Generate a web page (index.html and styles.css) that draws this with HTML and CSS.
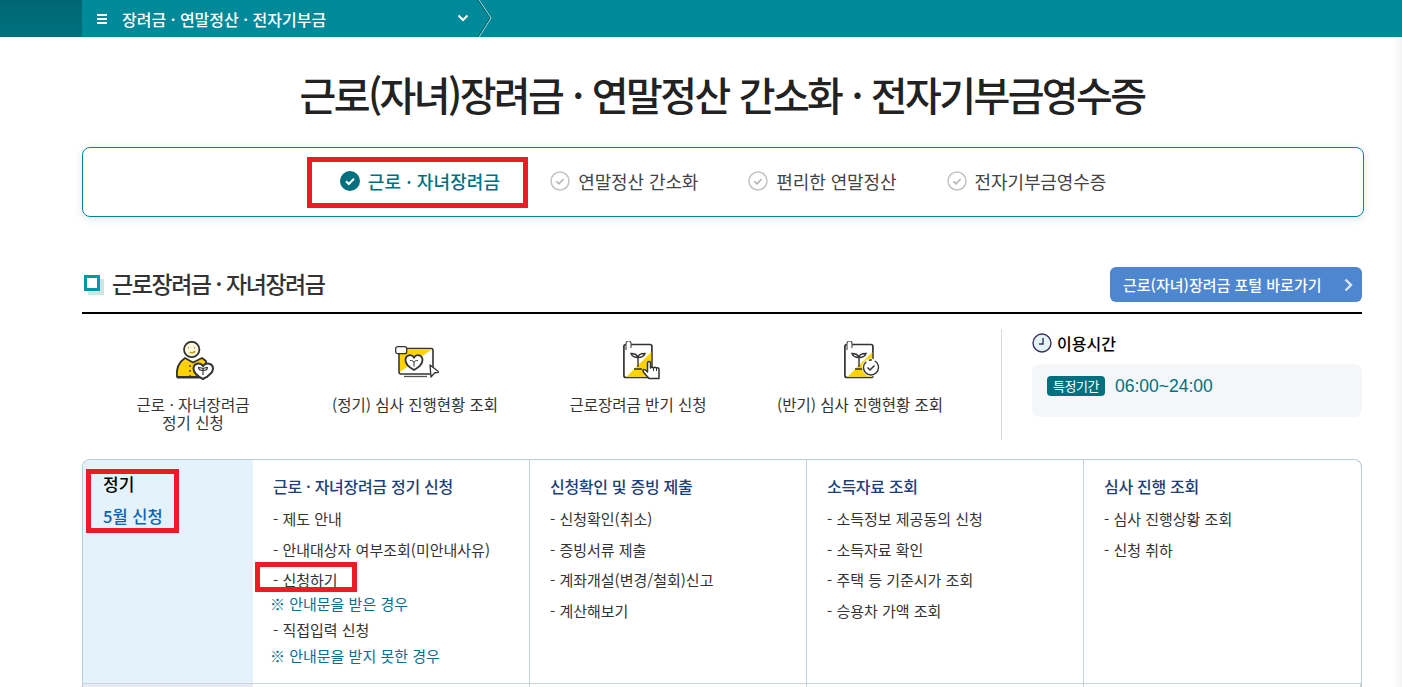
FILE: index.html
```html
<!DOCTYPE html>
<html lang="ko">
<head>
<meta charset="utf-8">
<title>근로(자녀)장려금 · 연말정산 간소화 · 전자기부금영수증</title>
<link rel="stylesheet" href="styles.css">
</head>
<body>
<div class="edge-shade"></div>
<header class="topbar">
  <div class="topbar-home"></div>
  <div class="crumb">
    <span class="burger"><i></i><i></i><i></i></span>
    <span class="crumb-text">장려금 · 연말정산 · 전자기부금</span>
    <svg class="crumb-chev" width="12" height="8" viewBox="0 0 12 8"><path d="M1.500 1.500 6 6l4.500-4.500" fill="none" stroke="#fff" stroke-width="2"/></svg>
    <svg class="crumb-sep" width="16" height="37" viewBox="0 0 16 37"><path d="M2 0 14 18 2 37" fill="none" stroke="#c4e2e6" stroke-width="1"/><path d="M1 0 13 18 1 37" fill="none" stroke="#00626f" stroke-width="1"/></svg>
  </div>
</header>
<main class="page">
  <h1 class="title">근로(자녀)장려금 · 연말정산 간소화 · 전자기부금영수증</h1>
  <nav class="tabs">
    <a class="tab tab-on">
      <svg width="20" height="20" viewBox="0 0 20 20"><circle cx="10" cy="10" r="10" fill="#00707f"/><path d="M6 10.200 8.800 13 14 7.800" fill="none" stroke="#fff" stroke-width="2"/></svg>
      <span>근로 · 자녀장려금</span>
      <span class="redbox redbox-tab"></span>
    </a>
    <a class="tab">
      <svg width="20" height="20" viewBox="0 0 20 20"><circle cx="10" cy="10" r="9" fill="#fff" stroke="#c4c4c4" stroke-width="1.500"/><path d="M6.300 10.200 8.900 12.800 13.700 8" fill="none" stroke="#b5b5b5" stroke-width="1.600"/></svg>
      <span>연말정산 간소화</span>
    </a>
    <a class="tab">
      <svg width="20" height="20" viewBox="0 0 20 20"><circle cx="10" cy="10" r="9" fill="#fff" stroke="#c4c4c4" stroke-width="1.500"/><path d="M6.300 10.200 8.900 12.800 13.700 8" fill="none" stroke="#b5b5b5" stroke-width="1.600"/></svg>
      <span>편리한 연말정산</span>
    </a>
    <a class="tab">
      <svg width="20" height="20" viewBox="0 0 20 20"><circle cx="10" cy="10" r="9" fill="#fff" stroke="#c4c4c4" stroke-width="1.500"/><path d="M6.300 10.200 8.900 12.800 13.700 8" fill="none" stroke="#b5b5b5" stroke-width="1.600"/></svg>
      <span>전자기부금영수증</span>
    </a>
  </nav>

  <section class="head">
    <h2 class="head-title"><span class="head-mark"></span>근로장려금 · 자녀장려금</h2>
    <a class="portal"><span>근로(자녀)장려금 포털 바로가기</span>
      <svg width="9" height="14" viewBox="0 0 9 14"><path d="M1.500 1.500 7 7l-5.500 5.500" fill="none" stroke="#dbe7f6" stroke-width="2.400"/></svg>
    </a>
  </section>

  <section class="quick">
    <ul class="quick-list">
      <li class="quick-item">
        <svg width="44" height="40" viewBox="-5 0 44 40">
          <path d="M1 36c-1-8 2-15 8-19l8 4.500 9-4.500 4 3 1 16z" fill="#ffd200" stroke="#333" stroke-width="1.800" stroke-linejoin="round"/>
          <path d="M1 36.500h26" stroke="#333" stroke-width="2"/>
          <circle cx="15.700" cy="8.500" r="7.700" fill="#fff9dc" stroke="#333" stroke-width="1.800"/>
          <path d="M13.500 11c2 1.500 4 1 5.500-1" stroke="#c79a00" stroke-width="1.400" fill="none"/>
          <path d="M12.500 6.500v.8M18.500 6.500v.8" stroke="#333" stroke-width="1.200"/>
          <circle cx="14" cy="25" r=".9" fill="#333"/><circle cx="14" cy="30" r=".9" fill="#333"/><circle cx="14" cy="35" r=".9" fill="#333"/>
          <path d="M27 38c-6-3-9.500-6-9.500-10.500 0-5 6.500-7 9.500-2.500 3-4.500 10-2.500 10 2.500C37 32 33 35 27 38z" fill="#fff" stroke="#333" stroke-width="2"/>
          <path d="M27 34v-5m-4.500-2.500c2.500 0 4.500.7 4.500 2.500 0-1.800 2-2.500 4.500-2.500 0 2-1.500 3-4.500 3-3 0-4.500-1-4.500-3z" fill="none" stroke="#333" stroke-width="1.100"/>
        </svg>
        <span>근로 · 자녀장려금<br>정기 신청</span>
      </li>
      <li class="quick-item">
        <svg width="48" height="40" viewBox="-4 -5 48 40">
          <rect x="4" y="2.500" width="34" height="25.500" rx="2" fill="#fff" stroke="#333" stroke-width="1.600"/>
          <path d="M5 3.500h31.500L5 26z" fill="#ffd200"/>
          <rect x=".7" y=".7" width="11" height="7" rx="2" fill="#fff" stroke="#333" stroke-width="1.300"/>
          <path d="M19 24c-5.500-3-8.500-6-8.500-10 0-5 6-6.500 8.500-2.500 2.500-4 8.500-2.500 8.500 2.500 0 4-3 7-8.500 10z" fill="#fff" stroke="#333" stroke-width="1.800"/>
          <path d="M19 20.500v-4m-4-2c2 0 4 .5 4 2 0-1.500 2-2 4-2" fill="none" stroke="#333"/>
          <path d="M35 19l9 7-4.500 1-3.500 4z" fill="#fff" stroke="#333" stroke-width="1.300" stroke-linejoin="round"/>
          <path d="M9 30.500h23" stroke="#555" stroke-width="1.300"/>
        </svg>
        <span>(정기) 심사 진행현황 조회</span>
      </li>
      <li class="quick-item">
        <svg width="44" height="40" viewBox="-7 0 44 40">
          <rect x=".9" y="3.500" width="28" height="33" rx="2" fill="#fff" stroke="#333" stroke-width="1.700"/>
          <path d="M28.300 11v24.700H3.500z" fill="#ffd200"/>
          <path d="M3 9V2.500a2.500 2.500 0 0 1 5 0V7" fill="#fff" stroke="#555" stroke-width="1.200"/>
          <path d="M11 28h8M15 26V16.500m0 0c-4 0-6-1-7-4 4 0 6 1 7 4zm0 0c0-3 3-4 7-4-1 3-3 4-7 4z" fill="none" stroke="#333" stroke-width="1.400"/>
          <path d="M26 37.500c-2-3-7-6.500-6-8.500 1-1 3 0 4.500 2V22c0-2 3-2 3 0v5c1-1 2-1 3 0 1-1 2-1 3 0 1-.5 2.500 0 2.500 1v9.500z" fill="#fff" stroke="#333" stroke-width="1.500" stroke-linejoin="round"/>
          <path d="M30.500 27v3M33.500 27v3" stroke="#333"/>
        </svg>
        <span>근로장려금 반기 신청</span>
      </li>
      <li class="quick-item">
        <svg width="44" height="40" viewBox="-6 0 44 40">
          <rect x=".9" y="3.500" width="28" height="33" rx="2" fill="#fff" stroke="#333" stroke-width="1.700"/>
          <path d="M28.300 11v24.700H3.500z" fill="#ffd200"/>
          <path d="M3 9V2.500a2.500 2.500 0 0 1 5 0V7" fill="#fff" stroke="#555" stroke-width="1.200"/>
          <path d="M11 28h8M15 26V16.500m0 0c-4 0-6-1-7-4 4 0 6 1 7 4zm0 0c0-3 3-4 7-4-1 3-3 4-7 4z" fill="none" stroke="#333" stroke-width="1.400"/>
          <circle cx="27" cy="26.500" r="9" fill="#fff"/>
          <circle cx="27" cy="26.500" r="7.500" fill="#fff" stroke="#333" stroke-width="1.400" stroke-dasharray="30 3 3 3"/>
          <path d="M23.500 26.500l2.500 2.500 4.500-4.500" fill="none" stroke="#333" stroke-width="1.500"/>
        </svg>
        <span>(반기) 심사 진행현황 조회</span>
      </li>
    </ul>
    <aside class="hours">
      <h3 class="hours-title">
        <svg width="20" height="20" viewBox="0 0 20 20"><circle cx="10" cy="10" r="9" fill="#e4f3f5" stroke="#3a2f5f" stroke-width="1.400"/><path d="M11 5v6H7" fill="none" stroke="#3a2f5f" stroke-width="1.400"/></svg>
        이용시간
      </h3>
      <div class="hours-box">
        <span class="badge">특정기간</span>
        <span class="hours-time">06:00~24:00</span>
      </div>
    </aside>
  </section>

  <section class="board">
    <div class="period">
      <strong class="period-name">정기</strong>
      <span class="period-when">5월 신청</span>
      <span class="redbox redbox-period"></span>
    </div>
    <div class="col">
      <h4>근로 · 자녀장려금 정기 신청</h4>
      <ul>
        <li>- 제도 안내</li>
        <li>- 안내대상자 여부조회(미안내사유)</li>
        <li class="tight">- 신청하기<span class="redbox redbox-apply"></span></li>
        <li class="note">※ 안내문을 받은 경우</li>
        <li class="plain">- 직접입력 신청</li>
        <li class="note">※ 안내문을 받지 못한 경우</li>
      </ul>
    </div>
    <div class="col">
      <h4>신청확인 및 증빙 제출</h4>
      <ul>
        <li>- 신청확인(취소)</li>
        <li>- 증빙서류 제출</li>
        <li>- 계좌개설(변경/철회)신고</li>
        <li>- 계산해보기</li>
      </ul>
    </div>
    <div class="col">
      <h4>소득자료 조회</h4>
      <ul>
        <li>- 소득정보 제공동의 신청</li>
        <li>- 소득자료 확인</li>
        <li>- 주택 등 기준시가 조회</li>
        <li>- 승용차 가액 조회</li>
      </ul>
    </div>
    <div class="col">
      <h4>심사 진행 조회</h4>
      <ul>
        <li>- 심사 진행상황 조회</li>
        <li>- 신청 취하</li>
      </ul>
    </div>
    <div class="period period-next"></div>
    <div class="col col-next"></div>
    <div class="col col-next"></div>
    <div class="col col-next"></div>
    <div class="col col-next"></div>
  </section>
</main>
</body>
</html>
```
FILE: styles.css
```css
* { box-sizing: border-box; }
html, body { margin: 0; padding: 0; height: 687px; overflow: hidden; background: #fff; }
body { font-family: "Noto Sans CJK KR", "Noto Sans", sans-serif; color: #222; position: relative; }
ul { list-style: none; margin: 0; padding: 0; }
h1, h2, h3, h4 { margin: 0; }

.edge-shade { position: absolute; right: 0; top: 37px; bottom: 0; width: 10px; background: linear-gradient(90deg, rgba(0, 0, 0, 0), rgba(0, 0, 0, .045)); }

.topbar { display: flex; height: 37px; background: #008999; }
.topbar-home { width: 82px; background: linear-gradient(#006674, #00707e); }
.crumb { display: flex; align-items: center; width: 410px; padding-left: 15px; position: relative; }
.burger { display: flex; flex-direction: column; gap: 2px; width: 10px; margin-right: 15px; }
.burger i { display: block; height: 2px; background: #fff; }
.crumb-text { color: #fff; font-size: 16px; font-weight: 500; width: 335px; white-space: nowrap; }
.crumb-chev { position: absolute; left: 375px; top: 14px; }
.crumb-sep { position: absolute; left: 395px; top: 0; }

.page { width: 1282px; margin-left: 82px; }
.title { font-size: 40px; font-weight: 500; letter-spacing: -2.6px; word-spacing: 1.5px; line-height: 60px; text-align: center; color: #222; margin-top: 27px; padding-right: 2px; white-space: nowrap; }
.tabs { display: flex; justify-content: center; align-items: center; gap: 50px; height: 70px; margin-top: 23px; border: 1px solid #00869a; border-radius: 8px; box-shadow: 0 2px 8px rgba(0, 60, 80, .12); padding-bottom: 2px; }
.tab { display: flex; align-items: center; gap: 8px; font-size: 18px; line-height: 26px; letter-spacing: -0.1px; color: #444; position: relative; white-space: nowrap; }
.tab-on { color: #00707f; font-weight: 500; letter-spacing: 0.1px; }

.redbox { position: absolute; border: 5px solid #ed1c24; pointer-events: none; }
.redbox-tab { left: -33px; top: -11px; width: 221px; height: 51px; }
.redbox-period { left: 3px; top: 9px; width: 93px; height: 64px; }
.redbox-apply { left: -18px; top: -8px; width: 102px; height: 30px; }

.head { display: flex; justify-content: space-between; align-items: center; width: 1280px; margin-top: 50px; height: 35px; }
.head-title { display: flex; align-items: center; font-size: 23px; font-weight: 500; letter-spacing: -1.45px; color: #333; white-space: nowrap; padding-bottom: 4px; }
.head-mark { width: 16px; height: 16px; border: 3px solid #0098a8; background: #fff; margin: 0 12px 0 2px; box-shadow: 4px 4px 0 #cfe5e0; }
.portal { display: flex; align-items: center; justify-content: space-between; width: 252px; height: 35px; padding: 0 9px 0 13px; background: #4e86cf; border-radius: 6px; color: #fff; font-size: 15px; font-weight: 500; letter-spacing: 0; white-space: nowrap; }

.quick { display: flex; width: 1280px; margin-top: 10px; border-top: 2px solid #000; padding-top: 15px; height: 130px; }
.quick-list { display: grid; grid-template-columns: 222px 222px 224px 220px; width: 920px; height: 111px; border-right: 1px solid #d9d9d9; }
.quick-item { display: flex; flex-direction: column; align-items: center; font-size: 15.500px; line-height: 18px; color: #333; text-align: center; padding-top: 12px; }
.quick-item svg { margin-bottom: 14px; height: 40px; flex: none; }
.hours { margin-left: 30px; width: 330px; }
.hours-title { display: flex; align-items: center; gap: 5px; font-size: 16px; font-weight: 500; color: #000; height: 24px; margin-top: 2px; }
.hours-box { display: flex; align-items: flex-start; gap: 10px; height: 53px; margin-top: 9px; padding: 12px 15px; background: #f5f6f8; border-radius: 8px; }
.badge { height: 20px; width: 58px; background: #00707f; color: #fff; border-radius: 4px; font-size: 13px; line-height: 19px; text-align: center; white-space: nowrap; letter-spacing: -0.4px; }
.hours-time { font-family: "Liberation Sans", sans-serif; font-size: 17.500px; line-height: 19px; margin-top: 1px; color: #00707f; }

.board { display: grid; grid-template-columns: 170px 277px 277px 277px 1fr; grid-template-rows: 223px 40px; width: 1280px; margin-top: 17px; border: 1px solid #b9cdd5; border-bottom: 0; border-radius: 8px 8px 0 0; overflow: hidden; }
.period { background: #e3f2fb; padding: 14px 20px; display: flex; flex-direction: column; position: relative; }
.period-name { font-size: 17px; font-weight: 500; color: #000; line-height: 20px; }
.period-when { font-size: 16.500px; font-weight: 500; color: #0e63b5; margin-top: 12px; line-height: 20px; }
.period-next { background: #e6e9f6; border-top: 1px solid #c8d6dc; }
.col { padding: 16px 20px; border-right: 1px solid #c6d3dc; }
.col:nth-child(5) { border-right: 0; }
.col-next { border-top: 1px solid #c8d6dc; }
.col h4 { font-size: 16px; font-weight: 500; color: #1c3f78; letter-spacing: -0.3px; line-height: 20px; margin-bottom: 13px; white-space: nowrap; }
.col li { font-size: 15px; line-height: 19px; color: #333; margin-bottom: 11.500px; white-space: nowrap; position: relative; }
.col li.tight { margin-bottom: 5px; }
.col li.plain { margin-bottom: 7px; }
.col li.note { color: #0a6e8c; margin-bottom: 7px; margin-left: -3px; }
```
